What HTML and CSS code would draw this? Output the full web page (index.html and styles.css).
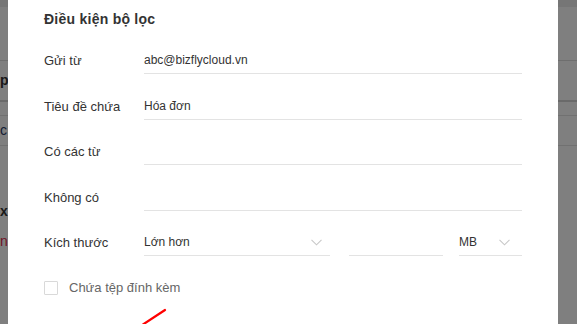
FILE: index.html
```html
<!DOCTYPE html>
<html lang="vi">
<head>
<meta charset="utf-8">
<title>Điều kiện bộ lọc</title>
<link rel="stylesheet" href="styles.css">
</head>
<body>
<div class="page">
  <div class="page-top"></div>
  <div class="page-toolbar"></div>
  <div class="page-row page-row-bold">p</div>
  <div class="page-band"></div>
  <div class="page-row page-row-sm">c</div>
  <div class="page-gap"></div>
  <div class="page-row page-row-x">x</div>
  <div class="page-row page-row-red">nl</div>
</div>
<div class="overlay"></div>
<div class="modal">
  <h2 class="modal-title">Điều kiện bộ lọc</h2>
  <div class="form">
    <div class="form-row">
      <span class="label">Gửi từ</span>
      <div class="field">abc@bizflycloud.vn</div>
    </div>
    <div class="form-row">
      <span class="label">Tiêu đề chứa</span>
      <div class="field">Hóa đơn</div>
    </div>
    <div class="form-row">
      <span class="label">Có các từ</span>
      <div class="field"></div>
    </div>
    <div class="form-row">
      <span class="label">Không có</span>
      <div class="field"></div>
    </div>
    <div class="form-row">
      <span class="label">Kích thước</span>
      <div class="size-fields">
        <div class="field select select-cmp">Lớn hơn
          <svg class="chev" width="11" height="7" viewBox="0 0 11 7"><path d="M0.5 0.8 L5.5 5.8 L10.5 0.8" fill="none" stroke="#c8c8c8" stroke-width="1.1"/></svg>
        </div>
        <div class="field size-num"></div>
        <div class="field select select-unit">MB
          <svg class="chev" width="11" height="7" viewBox="0 0 11 7"><path d="M0.5 0.8 L5.5 5.8 L10.5 0.8" fill="none" stroke="#c8c8c8" stroke-width="1.1"/></svg>
        </div>
      </div>
    </div>
  </div>
  <label class="check-row"><span class="checkbox"></span><span class="check-label">Chứa tệp đính kèm</span></label>
  <svg class="annot" width="30" height="20" viewBox="0 0 30 20"><line x1="1" y1="19.5" x2="23" y2="5" stroke="#ff0000" stroke-width="2.2" stroke-linecap="round"/></svg>
</div>
</body>
</html>
```
FILE: styles.css
```css
html, body {
  margin: 0;
  padding: 0;
  width: 577px;
  height: 324px;
  overflow: hidden;
  background: #fff;
  font-family: "Liberation Sans", Arial, sans-serif;
}
.page {
  display: flex;
  flex-direction: column;
  width: 577px;
}
.page-top {
  height: 7px;
  background: #ececec;
}
.page-toolbar {
  height: 53px;
  border-bottom: 1px solid #dcdcdc;
}
.page-row {
  font-size: 14px;
  color: #333;
  padding-left: 0;
}
.page-row-bold {
  height: 39px;
  line-height: 39px;
  font-weight: bold;
  border-bottom: 2px solid #d4d4d4;
}
.page-band {
  height: 13px;
  border-bottom: 1px solid #e2e2e2;
}
.page-row-sm {
  height: 29px;
  line-height: 29px;
  border-bottom: 1px solid #e2e2e2;
  color: #2a3a66;
}
.page-gap {
  height: 46px;
}
.page-row-x {
  height: 39px;
  line-height: 39px;
  font-weight: bold;
}
.page-row-red {
  height: 20px;
  line-height: 20px;
  color: #e0284a;
}
.overlay {
  position: fixed;
  inset: 0;
  background: rgba(0, 0, 0, 0.5);
}
.modal {
  position: fixed;
  left: 8px;
  top: 0;
  width: 550px;
  bottom: 0;
  background: #fff;
  box-sizing: border-box;
  padding: 9px 36px 0;
}
.modal-title {
  margin: 0;
  font-size: 14px;
  letter-spacing: 0.25px;
  font-weight: bold;
  line-height: 20px;
  color: #333;
}
.form {
  margin-top: 18px;
  display: flex;
  flex-direction: column;
  gap: 18.5px;
}
.form-row {
  display: flex;
  align-items: center;
  height: 27px;
}
.label {
  width: 100px;
  flex: none;
  font-size: 13px;
  color: #333;
}
.field {
  flex: 1;
  height: 26px;
  line-height: 26px;
  border-bottom: 1px solid #e3e3e3;
  font-size: 12px;
  color: #333;
  box-sizing: content-box;
}
.size-fields {
  flex: 1;
  display: flex;
}
.select {
  position: relative;
}
.select-cmp {
  flex: none;
  width: 186px;
}
.size-num {
  flex: none;
  width: 94px;
  margin-left: 19px;
}
.select-unit {
  flex: none;
  width: 63px;
  margin-left: 16px;
}
.chev {
  position: absolute;
  top: 10px;
}
.select-cmp .chev {
  right: 8px;
}
.select-unit .chev {
  right: 12px;
}
.check-row {
  display: flex;
  align-items: center;
  gap: 11px;
  margin-top: 18px;
  height: 27px;
}
.checkbox {
  width: 12px;
  height: 12px;
  border: 1px solid #d9d9d9;
  border-radius: 1px;
  background: #fff;
}
.check-label {
  font-size: 13px;
  color: #666;
}
.annot {
  position: absolute;
  left: 134px;
  top: 305px;
}
```
